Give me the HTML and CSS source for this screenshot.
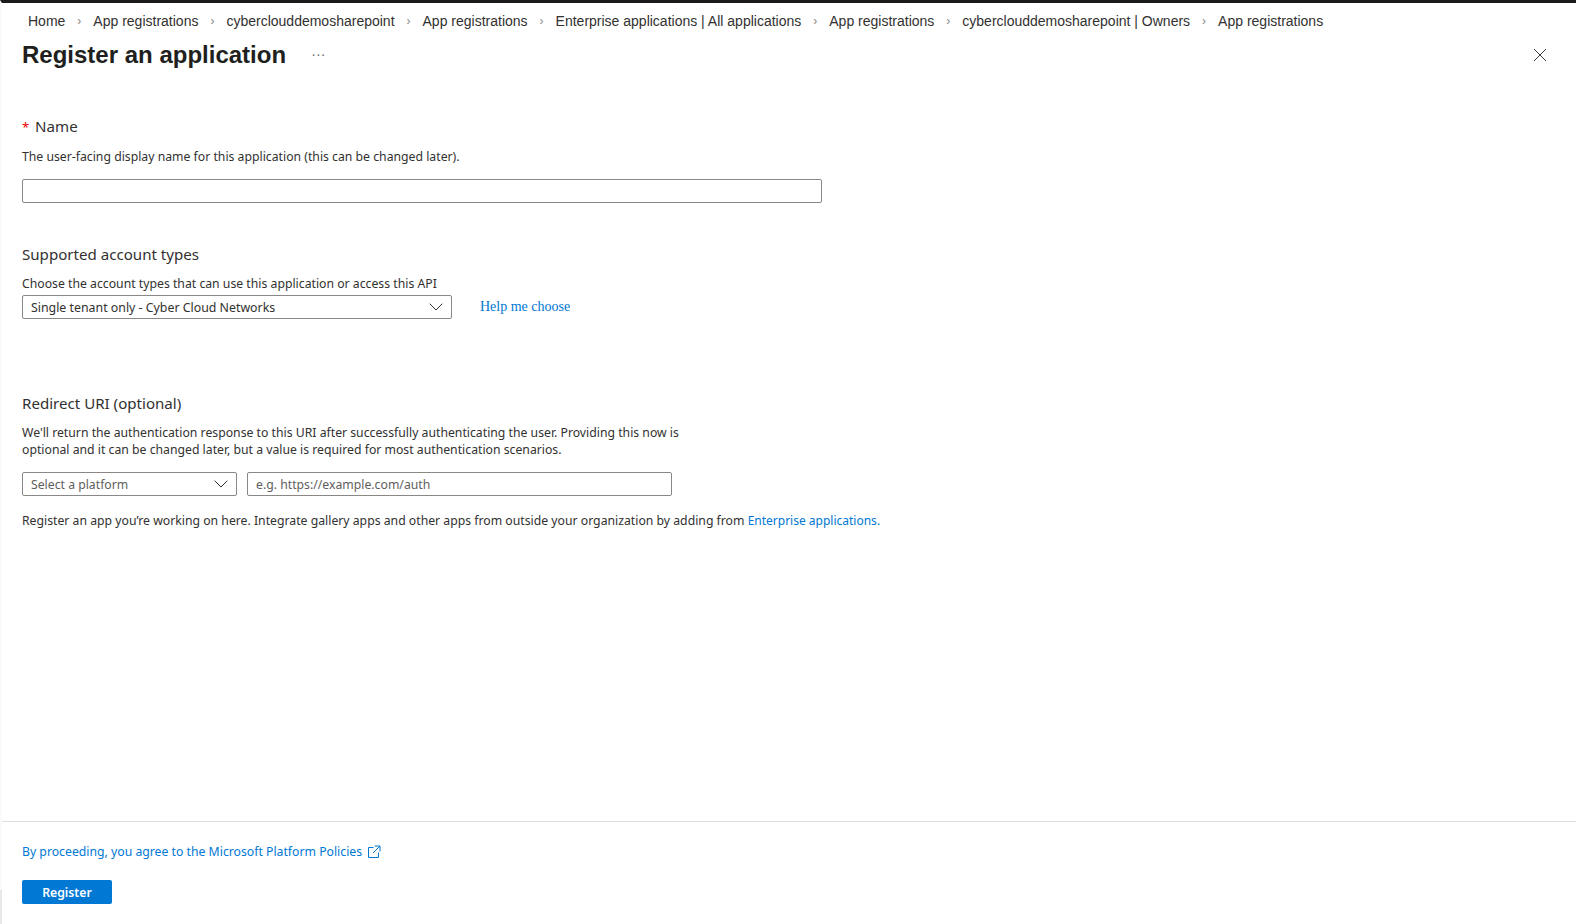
FILE: index.html
```html
<!DOCTYPE html>
<html lang="en">
<head>
<meta charset="utf-8">
<title>Register an application</title>
<link rel="stylesheet" href="styles.css">
</head>
<body>
<div class="page">
  <nav class="crumbs">
    <a>Home</a><span class="sep">›</span>
    <a>App registrations</a><span class="sep">›</span>
    <a>cyberclouddemosharepoint</a><span class="sep">›</span>
    <a>App registrations</a><span class="sep">›</span>
    <a>Enterprise applications | All applications</a><span class="sep">›</span>
    <a>App registrations</a><span class="sep">›</span>
    <a>cyberclouddemosharepoint | Owners</a><span class="sep">›</span>
    <a>App registrations</a>
  </nav>
  <header class="head">
    <h1 class="title">Register an application</h1>
    <span class="more">···</span>
    <svg class="close" width="14" height="14" viewBox="0 0 14 14"><path d="M1 1l12 12M13 1L1 13" stroke="#3b3a39" stroke-width="1" fill="none"/></svg>
  </header>
  <main class="form">
    <section class="sec-name">
      <h2 class="label"><span class="req">*</span> Name</h2>
      <p class="desc">The user-facing display name for this application (this can be changed later).</p>
      <input class="box name-input" type="text">
    </section>
    <section class="sec-acct">
      <h2 class="label">Supported account types</h2>
      <p class="desc tight">Choose the account types that can use this application or access this API</p>
      <div class="row">
        <div class="box select acct-select"><span>Single tenant only - Cyber Cloud Networks</span>
          <svg width="14" height="8" viewBox="0 0 14 8"><path d="M.7.7L7 7l6.300-6.300" stroke="#323130" fill="none"/></svg></div>
        <a class="help">Help me choose</a>
      </div>
    </section>
    <section class="sec-uri">
      <h2 class="label">Redirect URI (optional)</h2>
      <p class="desc para">We'll return the authentication response to this URI after successfully authenticating the user. Providing this now is optional and it can be changed later, but a value is required for most authentication scenarios.</p>
      <div class="row uri-row">
        <div class="box select platform"><span class="muted">Select a platform</span>
          <svg width="14" height="8" viewBox="0 0 14 8"><path d="M.7.7L7 7l6.300-6.300" stroke="#323130" fill="none"/></svg></div>
        <div class="box select uri"><span class="muted">e.g. https://example.com/auth</span></div>
      </div>
      <p class="desc note">Register an app you’re working on here. Integrate gallery apps and other apps from outside your organization by adding from <a class="link">Enterprise applications</a><a class="link">.</a></p>
    </section>
  </main>
  <footer class="foot">
    <a class="link policy">By proceeding, you agree to the Microsoft Platform Policies
      <svg width="13" height="13" viewBox="0 0 13 13"><path d="M5.500 2.500H.5v10h10v-5M6.500 1h5.500v5.500M12 1L5 8" stroke="#0078d4" fill="none"/></svg></a>
    <button class="register">Register</button>
  </footer>
</div>
</body>
</html>
```
FILE: styles.css
```css
* { box-sizing: border-box; }
html, body { margin: 0; height: 100%; }
body { background: #fff; color: #323130; font-family: "Noto Sans", "Open Sans", sans-serif; font-size: 12.24px; overflow: hidden; }
.page { position: relative; height: 924px; border-top: 3px solid #1b1a19; border-left: 2px solid #fafafa; display: flex; flex-direction: column; }
.page::after { content: ""; position: absolute; left: -2px; top: 887px; bottom: 0; width: 2px; background: #e8e8e8; }
.crumbs { display: flex; align-items: center; height: 36px; padding-left: 26px; font-family: "Liberation Sans", sans-serif; font-size: 14px; color: #323130; white-space: nowrap; }
.sep { width: 28px; text-align: center; font-size: 12px; color: #8a8886; }
.head { display: flex; align-items: center; height: 32px; padding-left: 20px; }
.title { margin: 0; font-family: "Liberation Sans", sans-serif; font-size: 24px; font-weight: 700; color: #201f1e; line-height: 32px; }
.more { margin-left: 26px; font-size: 12px; letter-spacing: 1.500px; color: #605e5c; }
.close { margin-left: auto; margin-right: 29px; }
.form { flex: 1; padding: 45px 20px 0; }
.label { margin: 0; font-size: 15.1px; font-weight: 400; line-height: 20px; color: #323130; }
.req { color: #e00; font-size: 13px; margin-right: 2px; }
.desc { margin: 11px 0 0; line-height: 17px; color: #323130; }
.box { display: block; height: 24px; border: 1px solid #8a8886; border-radius: 2px; background: #fff; }
.name-input { width: 800px; margin-top: 14px; }
.sec-acct { margin-top: 41px; }
.row { display: flex; align-items: center; }
.select { display: flex; align-items: center; justify-content: space-between; padding: 0 8px; }
.acct-select { width: 430px; margin-top: 3px; font-size: 12.35px; }
.help { margin-left: 28px; padding-top: 3px; font-family: "Liberation Serif", serif; font-size: 14px; color: #0078d4; }
.sec-uri { margin-top: 74px; }
.para { width: 680px; }
.uri-row { margin-top: 14px; gap: 10px; }
.platform { width: 215px; }
.uri { width: 425px; }
.muted { color: #605e5c; }
.note { margin-top: 16px; }
.note .link { font-size: 12px; }
.link { color: #0078d4; }
.foot { height: 103px; border-top: 1px solid #e1dfdd; padding: 21px 20px 0; display: flex; flex-direction: column; align-items: flex-start; }
.policy { display: flex; align-items: center; gap: 6px; line-height: 17px; }
.register { margin-top: 20px; width: 90px; height: 24px; border: 0; border-radius: 2px; background: #0078d4; color: #fff; font: 600 12.24px "Noto Sans", sans-serif; }
```
